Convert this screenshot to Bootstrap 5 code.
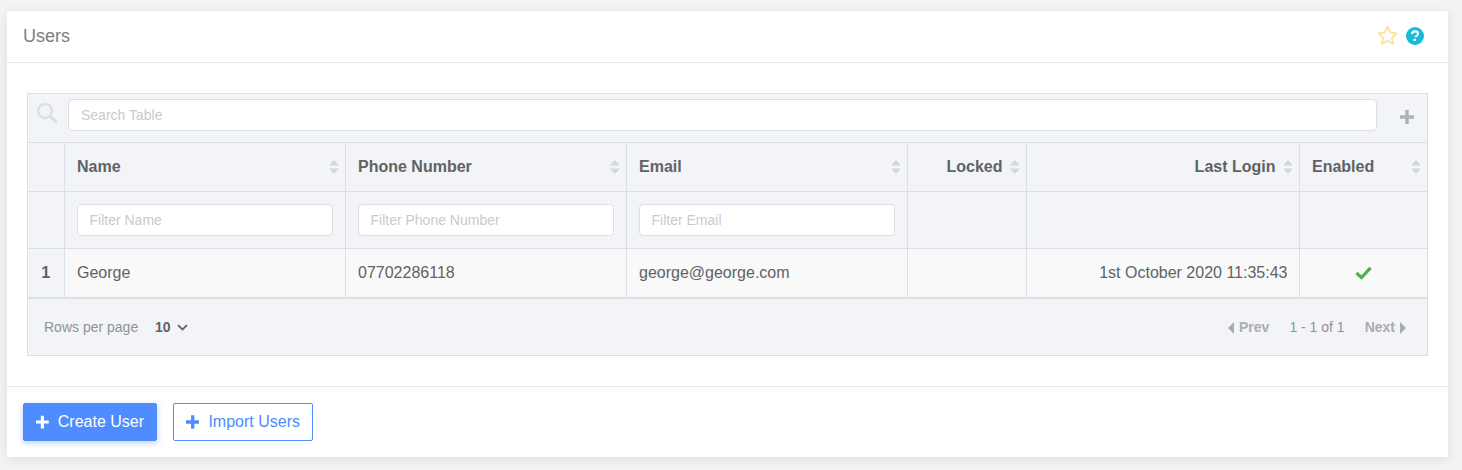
<!DOCTYPE html>
<html lang="en">
<head>
<meta charset="utf-8">
<title>Users</title>
<link rel="stylesheet" href="https://cdn.jsdelivr.net/npm/bootstrap@5.3.0/dist/css/bootstrap.min.css">
<style>
html,body{height:470px;overflow:hidden}
body{background:#f3f3f3;font-family:"Liberation Sans",Arial,sans-serif;color:#606266;font-size:16px;padding:11px 14px 0 7px}
.panel{background:#fff;box-shadow:0 2px 10px rgba(0,0,0,.09);height:446px;display:flex;flex-direction:column}
.panel-head{height:52px;border-bottom:1px solid #e8e9eb;padding:0 24px 0 16px;display:flex;align-items:center;justify-content:space-between}
.panel-title{font-size:18px;color:#7e7e7e}
.head-icons{margin-top:-2px}
.panel-body{flex:1;padding:30px 20px 0;border-bottom:1px solid #e8e9eb}
.vgt{border:1px solid #dcdfe6;background:#f2f4f8;height:263px;display:flex;flex-direction:column}
.vgt-search{height:49px;border-bottom:1px solid #dcdfe6;display:flex;align-items:flex-start;padding:5px 13px 0 8px}
.vgt-search svg.mag{margin:3px 10px 0 0;flex:none}
.vgt-input{display:block;width:100%;height:32px;padding:0 12px;border:1px solid #dcdfe6;border-radius:4px;background:#fff;font-size:14px;color:#606266;font-family:inherit;outline:0}
.vgt-input::placeholder{color:#c9cacc;opacity:1}
.vgt-plus{flex:none;margin:11px 0 0 23px}
.vgt-table{table-layout:fixed;width:100%;border-collapse:collapse;margin:0}
.vgt-table th,.vgt-table td{border-left:1px solid #dcdfe6;border-bottom:1px solid #dcdfe6;padding:0 12px;position:relative;vertical-align:middle}
.vgt-table tr>*:first-child{border-left:0}
.c-n{width:36px}.c-w{width:281px}.c-l{width:119px}.c-d{width:273px}
.hrow th{height:48px;font-weight:700;color:#606266;font-size:16px;line-height:20px;padding-left:12.5px}
.frow th{height:57px;font-weight:400}
.drow td{height:50px;background:#f9f9f9;color:#606266;border-bottom:2px solid #dcdfe6;line-height:20px;padding-left:12.5px}
.drow td.rn{background:#f2f4f8;text-align:center;font-weight:700;padding:0}
.ar{text-align:right}
.hrow th.ar{padding-right:23px}
.drow td.ar{padding-right:11px}
.sorter{position:absolute;right:6px;top:17px;width:10px;height:14px}
.vgt-foot{flex:1;display:flex;align-items:center;justify-content:space-between;padding:1px 21px 0 16px;font-size:14px;color:#909399}
.pp{font-weight:700;color:#606266;margin-left:13px;display:inline-flex;align-items:center;gap:6px}
.pgr{display:flex;align-items:center;color:#aaacb0}
.pgr b{display:inline-flex;align-items:center;gap:5px}
.pgr span{margin:0 20px;color:#909399}
.panel-foot{height:70px;padding:16px 16px 0;display:flex;align-items:flex-start;gap:16px}
.act{height:38px;padding:0 12px;border-radius:2px;font-size:16px;display:inline-flex;align-items:center;gap:9px;border:1px solid #4e8cff;line-height:1;white-space:nowrap}
.act-solid{background:#4e8cff;color:#fff;box-shadow:0 2px 6px rgba(78,140,255,.4);width:134px}
.act-line{background:#fff;color:#4e8cff;width:140px}
.act-solid:hover{color:#fff}
.act-line:hover{color:#4e8cff}
</style>
</head>
<body>
<div class="panel">
  <div class="panel-head">
    <div class="panel-title">Users</div>
    <div class="head-icons d-flex align-items-center gap-2">
      <svg width="21" height="21" viewBox="0 0 20 20"><path d="M10 1.6l2.6 5.5 6 .8-4.4 4.1 1.1 5.9L10 15l-5.3 2.9 1.1-5.9L1.4 7.9l6-.8z" fill="none" stroke="#ffe09a" stroke-width="1.7" stroke-linejoin="round"/></svg>
      <svg width="18" height="18" viewBox="0 0 18 18"><circle cx="9" cy="9" r="9" fill="#17bcd6"/><path d="M6 7c.1-1.7 1.3-2.6 3-2.6 1.7 0 3 1 3 2.4 0 1.1-.7 1.6-1.4 2.1-.7.4-1 .8-1 1.4" fill="none" stroke="#fff" stroke-width="2.1"/><rect x="7.6" y="11.8" width="2.2" height="2.2" fill="#fff"/></svg>
    </div>
  </div>
  <div class="panel-body">
    <div class="vgt">
      <div class="vgt-search">
        <svg class="mag" width="22" height="22" viewBox="0 0 22 22"><circle cx="9" cy="9" r="7" fill="none" stroke="#dcdfe6" stroke-width="2.4"/><path d="M14.5 14.5l5.5 5" stroke="#dcdfe6" stroke-width="3.4" stroke-linecap="round"/></svg>
        <input class="vgt-input" type="text" placeholder="Search Table">
        <svg class="vgt-plus" width="14" height="14" viewBox="0 0 14 14"><path d="M7 0v14M0 7h14" stroke="#adb0b8" stroke-width="3.4"/></svg>
      </div>
      <table class="vgt-table">
        <colgroup><col class="c-n"><col class="c-w"><col class="c-w"><col class="c-w"><col class="c-l"><col class="c-d"><col></colgroup>
        <thead>
          <tr class="hrow">
            <th></th>
            <th>Name<svg class="sorter" viewBox="0 0 10 14"><path d="M5 0l5 5.6H0zM5 14L0 8.4h10z" fill="#d3d6e2"/></svg></th>
            <th>Phone Number<svg class="sorter" viewBox="0 0 10 14"><path d="M5 0l5 5.6H0zM5 14L0 8.4h10z" fill="#d3d6e2"/></svg></th>
            <th>Email<svg class="sorter" viewBox="0 0 10 14"><path d="M5 0l5 5.6H0zM5 14L0 8.4h10z" fill="#d3d6e2"/></svg></th>
            <th class="ar">Locked<svg class="sorter" viewBox="0 0 10 14"><path d="M5 0l5 5.6H0zM5 14L0 8.4h10z" fill="#d3d6e2"/></svg></th>
            <th class="ar">Last Login<svg class="sorter" viewBox="0 0 10 14"><path d="M5 0l5 5.6H0zM5 14L0 8.4h10z" fill="#d3d6e2"/></svg></th>
            <th>Enabled<svg class="sorter" viewBox="0 0 10 14"><path d="M5 0l5 5.6H0zM5 14L0 8.4h10z" fill="#d3d6e2"/></svg></th>
          </tr>
          <tr class="frow">
            <th></th>
            <th><input class="vgt-input" type="text" placeholder="Filter Name"></th>
            <th><input class="vgt-input" type="text" placeholder="Filter Phone Number"></th>
            <th><input class="vgt-input" type="text" placeholder="Filter Email"></th>
            <th></th><th></th><th></th>
          </tr>
        </thead>
        <tbody>
          <tr class="drow">
            <td class="rn">1</td>
            <td>George</td>
            <td>07702286118</td>
            <td>george@george.com</td>
            <td></td>
            <td class="ar">1st October 2020 11:35:43</td>
            <td class="text-center"><svg class="d-block mx-auto" width="17" height="14" viewBox="0 0 17 14"><path d="M1.5 7l5 4.6L15.5 1.8" fill="none" stroke="#4caf50" stroke-width="3.2"/></svg></td>
          </tr>
        </tbody>
      </table>
      <div class="vgt-foot">
        <div>Rows per page <span class="pp">10 <svg width="11" height="7" viewBox="0 0 11 7"><path d="M1 1.2l4.5 4.2L10 1.2" fill="none" stroke="#606266" stroke-width="1.8"/></svg></span></div>
        <div class="pgr">
          <b><svg width="6" height="12" viewBox="0 0 6 12"><path d="M6 0v12L0 6z" fill="#aaacb0"/></svg>Prev</b>
          <span>1 - 1 of 1</span>
          <b>Next<svg width="6" height="12" viewBox="0 0 6 12"><path d="M0 0v12l6-6z" fill="#aaacb0"/></svg></b>
        </div>
      </div>
    </div>
  </div>
  <div class="panel-foot">
    <a class="act act-solid text-decoration-none" href="#"><svg width="14" height="14" viewBox="0 0 14 14"><path d="M7 0v14M0 7h14" stroke="#fff" stroke-width="3.4"/></svg>Create User</a>
    <a class="act act-line text-decoration-none" href="#"><svg width="14" height="14" viewBox="0 0 14 14"><path d="M7 0v14M0 7h14" stroke="#4e8cff" stroke-width="3.4"/></svg>Import Users</a>
  </div>
</div>
<script src="https://cdn.jsdelivr.net/npm/bootstrap@5.3.0/dist/js/bootstrap.bundle.min.js"></script>
</body>
</html>
